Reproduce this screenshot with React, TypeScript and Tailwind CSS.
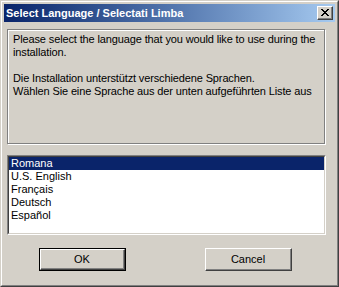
import React, { useState } from "react";

const languages = ["Romana", "U.S. English", "Français", "Deutsch", "Español"];

// bouton classique Windows 2000
function Win2kButton({ label, isDefault }: { label: string; isDefault?: boolean }) {
  return (
    <button
      className={
        "w-[87px] h-[23px] bg-[#d4d0c8] p-0 " +
        (isDefault ? "border border-black" : "border-0")
      }
    >
      <div className="w-full h-full border-t border-l border-t-white border-l-white border-r border-b border-r-[#404040] border-b-[#404040]">
        <div className="w-full h-full flex items-center justify-center border-r border-b border-r-[#808080] border-b-[#808080] text-[11px] text-black">
          {label}
        </div>
      </div>
    </button>
  );
}

export default function App() {
  const [selected, setSelected] = useState(0);

  return (
    <div
      className="w-[339px] h-[287px] bg-[#d4d0c8] border border-t-[#d4d0c8] border-l-[#d4d0c8] border-r-[#404040] border-b-[#404040]"
      style={{ fontFamily: '"Liberation Sans", Arial, sans-serif' }}
    >
      <div className="w-full h-full border border-t-white border-l-white border-r-[#808080] border-b-[#808080] p-[2px] flex flex-col">
        {/* barre de titre */}
        <div className="h-[18px] flex items-center justify-between pl-[2px] pr-[2px] bg-gradient-to-r from-[#0a246a] to-[#a6caf0]">
          <span className="text-white font-bold text-[11px] leading-none">
            Select Language / Selectati Limba
          </span>
          <div className="w-[16px] h-[14px] bg-[#d4d0c8] border border-t-white border-l-white border-r-[#404040] border-b-[#404040]">
            <div className="w-full h-full border-r border-b border-r-[#808080] border-b-[#808080] flex items-center justify-center">
              <svg width="8" height="7" viewBox="0 0 8 7" shapeRendering="crispEdges">
                <path
                  d="M0 0h2v1H0zM6 0h2v1H6zM1 1h2v1H1zM5 1h2v1H5zM2 2h4v1H2zM3 3h2v1H3zM2 4h4v1H2zM1 5h2v1H1zM5 5h2v1H5zM0 6h2v1H0zM6 6h2v1H6z"
                  fill="black"
                />
              </svg>
            </div>
          </div>
        </div>

        {/* contenu */}
        <div className="flex flex-col pl-[3px] pt-[7px]">
          <div className="w-[318px] h-[115px] border border-[#808080] shadow-[1px_1px_0_#ffffff,inset_1px_1px_0_#ffffff] pl-[5px] pt-[3px] text-[11px] leading-[13px] tracking-[-0.13px] text-black">
            <p>Please select the language that you would like to use during the installation.</p>
            <p className="mt-[13px]">Die Installation unterstützt verschiedene Sprachen.</p>
            <p>Wählen Sie eine Sprache aus der unten aufgeführten Liste aus</p>
          </div>

          <div className="mt-[11px] w-[319px] h-[80px] border border-t-[#808080] border-l-[#808080] border-r-white border-b-white">
            <div className="w-full h-full bg-white border border-t-[#404040] border-l-[#404040] border-r-[#d4d0c8] border-b-[#d4d0c8]">
              <ul className="text-[11px] leading-[13px]">
                {languages.map((lang, i) => (
                  <li
                    key={lang}
                    onClick={() => setSelected(i)}
                    className={
                      "pl-[2px] h-[13px] " +
                      (i === selected ? "bg-[#0a246a] text-white" : "text-black")
                    }
                  >
                    {lang}
                  </li>
                ))}
              </ul>
            </div>
          </div>

          <div className="mt-[13px] flex pl-[32px] gap-[79px]">
            <Win2kButton label="OK" isDefault />
            <Win2kButton label="Cancel" />
          </div>
        </div>
      </div>
    </div>
  );
}
